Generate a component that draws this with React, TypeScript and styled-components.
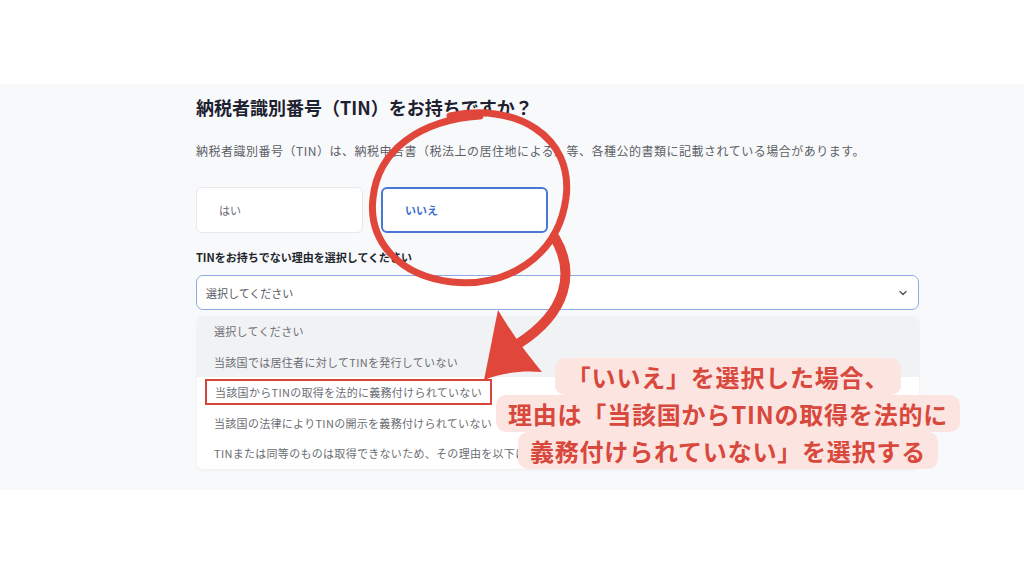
import React from 'react'
import styled, { createGlobalStyle } from 'styled-components'

const GlobalStyle = createGlobalStyle`
  html, body {
    margin: 0;
    padding: 0;
    background: #ffffff;
    font-family: "Noto Sans CJK JP", "Noto Sans", sans-serif;
  }
`;

const Page = styled.div`
  position: relative;
  width: 1024px;
  height: 575px;
  overflow: hidden;
  background: #fff;
`;

const Panel = styled.section`
  margin-top: 84px;
  height: 406px;
  background: #f8f9fb;
  padding: 10px 0 0 196px;
  box-sizing: border-box;
`;

const Content = styled.div`
  width: 723px;
  display: flex;
  flex-direction: column;
`;

const Title = styled.h1`
  margin: 0;
  font-size: 18px;
  line-height: 26px;
  font-weight: 700;
  color: #1d2130;
`;

const Description = styled.p`
  margin: 22px 0 0;
  font-size: 12px;
  line-height: 18px;
  letter-spacing: 0.5px;
  color: #5c5f66;
`;

const Choices = styled.div`
  display: flex;
  gap: 18px;
  margin-top: 27px;
`;

const Choice = styled.div<{ $active?: boolean }>`
  width: 167px;
  height: 46px;
  box-sizing: border-box;
  display: flex;
  align-items: center;
  padding-left: 22px;
  background: #fff;
  border-radius: 6px;
  border: ${p => (p.$active ? '2px solid #4a76d4' : '1px solid #e6e8ec')};
  color: ${p => (p.$active ? '#3f6fd0' : '#6a6d73')};
  font-size: 11px;
  font-weight: ${p => (p.$active ? 600 : 400)};
`;

const Label = styled.div`
  margin-top: 16px;
  font-size: 11px;
  font-weight: 700;
  color: #22252c;
  line-height: 16px;
`;

const Select = styled.div`
  margin-top: 10px;
  height: 35px;
  box-sizing: border-box;
  border: 1px solid #8eaae3;
  border-radius: 7px;
  background: #fff;
  display: flex;
  align-items: center;
  justify-content: space-between;
  padding: 0 10px 0 9px;
  font-size: 11px;
  color: #55585e;
`;

const Options = styled.ul`
  list-style: none;
  margin: 6px 0 0 1px;
  padding: 0;
  width: 722px;
  background: #fff;
  border-radius: 6px;
  overflow: hidden;
  box-shadow: 0 1px 3px rgba(0, 0, 0, 0.06);
`;

const Option = styled.li<{ $shade?: boolean }>`
  height: 30.5px;
  display: flex;
  align-items: center;
  padding-left: 17px;
  font-size: 11px;
  letter-spacing: 0.3px;
  color: #6b6e74;
  background: ${p => (p.$shade ? '#f1f2f4' : '#fff')};
  white-space: nowrap;
`;

const Marked = styled.span`
  margin-left: -9px;
  padding: 3px 8px;
  border: 2px solid #d9453a;
`;

const Overlay = styled.svg`
  position: absolute;
  left: 0;
  top: 0;
  pointer-events: none;
`;

const Note = styled.div`
  position: absolute;
  left: 497px;
  top: 358px;
  width: 462px;
  display: flex;
  flex-direction: column;
  align-items: center;
`;

const NoteLine = styled.span`
  display: block;
  padding: 0 12px;
  background: #fce4e0;
  border-radius: 10px;
  color: #d8483d;
  font-size: 24px;
  font-weight: 700;
  letter-spacing: 0.8px;
  line-height: 37px;
  white-space: nowrap;
`;

const Chevron = () => (
  <svg width="10" height="10" viewBox="0 0 10 10">
    <path d="M2 3.5 L5 6.5 L8 3.5" fill="none" stroke="#555" strokeWidth="1.4" strokeLinecap="round" />
  </svg>
);

const reasons = [
  '選択してください',
  '当該国では居住者に対してTINを発行していない',
  '当該国からTINの取得を法的に義務付けられていない',
  '当該国の法律によりTINの開示を義務付けられていない',
  'TINまたは同等のものは取得できないため、その理由を以下に記入する',
];

export default function App() {
  return (
    <Page>
      <GlobalStyle />
      <Panel>
        <Content>
          <Title>納税者識別番号（TIN）をお持ちですか？</Title>
          <Description>
            納税者識別番号（TIN）は、納税申告書（税法上の居住地による）等、各種公的書類に記載されている場合があります。
          </Description>
          <Choices>
            <Choice>はい</Choice>
            <Choice $active>いいえ</Choice>
          </Choices>
          <Label>TINをお持ちでない理由を選択してください</Label>
          <Select>
            <span>選択してください</span>
            <Chevron />
          </Select>
          <Options>
            {reasons.map((r, i) => (
              <Option key={i} $shade={i < 2}>
                {i === 2 ? <Marked>{r}</Marked> : r}
              </Option>
            ))}
          </Options>
        </Content>
      </Panel>

      <Overlay width="1024" height="575" viewBox="0 0 1024 575">
        <path
          d="M450 116 C515 102 574 136 566 198 C558 258 505 288 452 282 C398 276 368 240 373 198 C378 150 420 120 480 116"
          fill="none"
          stroke="#e0473a"
          strokeWidth="7"
          strokeLinecap="round"
        />
        <path
          d="M555 238 C575 272 568 312 518 344"
          fill="none"
          stroke="#e0473a"
          strokeWidth="10"
          strokeLinecap="round"
        />
        <path d="M498 310 C510 330 522 348 542 372 C522 370 502 373 484 380 C489 356 493 334 498 310 Z" fill="#e0473a" />
      </Overlay>

      <Note>
        <NoteLine>「いいえ」を選択した場合、</NoteLine>
        <NoteLine>理由は「当該国からTINの取得を法的に</NoteLine>
        <NoteLine>義務付けられていない」を選択する</NoteLine>
      </Note>
    </Page>
  );
}
